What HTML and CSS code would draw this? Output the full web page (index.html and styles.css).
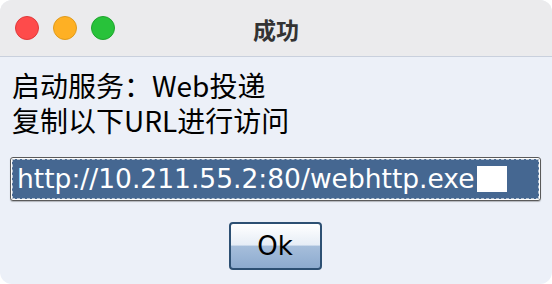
FILE: index.html
```html
<!DOCTYPE html>
<html>
<head>
<meta charset="utf-8">
<link rel="stylesheet" href="styles.css">
</head>
<body>
<div class="window">
  <div class="titlebar">
    <div class="lights">
      <span class="light red"></span>
      <span class="light yellow"></span>
      <span class="light green"></span>
    </div>
    <div class="title">成功</div>
  </div>
  <div class="content">
    <div class="message">
      <div class="line">启动服务：Web投递</div>
      <div class="line">复制以下URL进行访问</div>
    </div>
    <div class="field">
      <div class="field-inner">
        <span class="sel">http://10.211.55.2:80/webhttp.exe</span><span class="rest"></span>
      </div>
    </div>
    <div class="actions">
      <button class="btn">Ok</button>
    </div>
  </div>
</div>
</body>
</html>
```

FILE: styles.css
```css
* { box-sizing: border-box; }
html, body {
  margin: 0;
  padding: 0;
  background: #ffffff;
  width: 552px;
  height: 284px;
  overflow: hidden;
}
.window {
  width: 552px;
  height: 284px;
  border-radius: 12px;
  overflow: hidden;
  background: #ecf0f8;
  display: flex;
  flex-direction: column;
  font-family: "DejaVu Sans", "Noto Sans CJK SC", sans-serif;
}
.titlebar {
  height: 57px;
  flex: none;
  background: #ebebed;
  border-bottom: 1px solid #c9d0dd;
  position: relative;
  display: flex;
  align-items: center;
}
.lights {
  display: flex;
  gap: 14px;
  padding-left: 15px;
}
.light {
  width: 24px;
  height: 24px;
  border-radius: 50%;
  display: block;
}
.red { background: #fe4b4b; border: 1px solid #e0393a; }
.yellow { background: #feb024; border: 1px solid #e09b1c; }
.green { background: #28c23a; border: 1px solid #1fa52e; }
.title {
  position: absolute;
  left: 0;
  right: 0;
  top: 0;
  bottom: 0;
  display: flex;
  align-items: center;
  justify-content: center;
  font-family: "Noto Sans CJK SC", sans-serif;
  font-weight: bold;
  font-size: 23px;
  color: #333333;
  padding-top: 1px;
}
.content {
  flex: 1;
  display: flex;
  flex-direction: column;
  padding: 11px 11px 0 10px;
}
.message {
  padding-left: 2px;
  font-family: "Noto Sans CJK SC", sans-serif;
  font-size: 28px;
  font-weight: 400;
  color: #000;
}
.line {
  height: 35px;
  line-height: 35px;
}
.field {
  margin-top: 19px;
  height: 44px;
  border: 1px solid #5a5a5a;
  border-radius: 3px;
  box-shadow: 0 1px 1px rgba(0,0,0,0.25);
  background: #fff;
  padding: 1px;
}
.field-inner {
  height: 100%;
  background: #456791;
  border: 1px dashed #b7c3d1;
  display: flex;
  align-items: center;
  padding-left: 4px;
}
.sel {
  color: #ffffff;
  font-family: "DejaVu Sans", sans-serif;
  font-size: 26.5px;
  line-height: 28px;
}
.rest {
  display: block;
  width: 30px;
  height: 26px;
  background: #ffffff;
  margin-left: 2px;
}
.actions {
  display: flex;
  justify-content: center;
  margin-top: 21px;
  padding-right: 1px;
}
.btn {
  width: 93px;
  height: 48px;
  border: 2px solid #2d5073;
  border-radius: 4px;
  background: linear-gradient(to bottom, #ffffff 0%, #e6edf6 48%, #a6bedb 50%, #8dabcf 100%);
  font-family: "DejaVu Sans", sans-serif;
  font-size: 26px;
  color: #000;
  padding: 0;
  line-height: 44px;
}
```
